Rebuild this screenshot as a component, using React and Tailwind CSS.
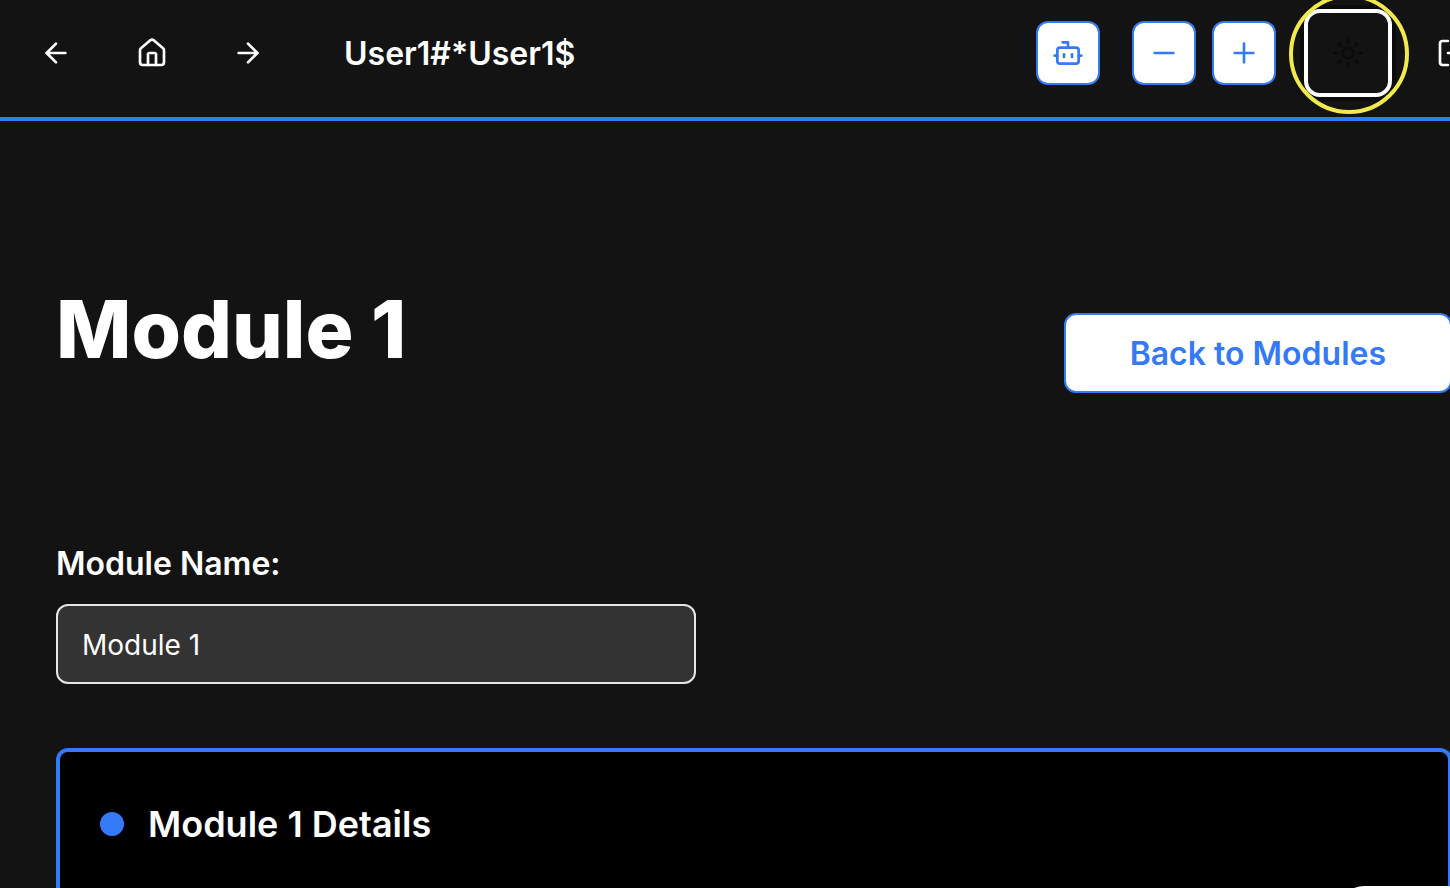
import { ArrowLeft, ArrowRight, Bot, House, LogOut, Minus, Plus, Sun } from "lucide-react";

const iconButton = "flex size-16 shrink-0 items-center justify-center rounded-xl";
const toolButton = "border-2 border-[#347af6] bg-white text-[#347af6]";

function Header() {
  return (
    <header className="flex items-center justify-between border-b-4 border-[#347af6] px-6 pt-[9px] pb-5">
      <nav className="flex items-center gap-8">
        <button type="button" aria-label="Back" className={iconButton}>
          <ArrowLeft size={32} />
        </button>
        <a href="#home" aria-label="Home" className={iconButton}>
          <House size={32} />
        </a>
        <button type="button" aria-label="Forward" className={iconButton}>
          <ArrowRight size={32} />
        </button>
        <p className="pt-0.5 pl-8 text-[32px] leading-10 font-semibold">User1#*User1$</p>
      </nav>
      <div className="flex items-center gap-7">
        <div className="flex items-center gap-8">
          <button type="button" aria-label="Assistant" className={`${iconButton} ${toolButton}`}>
            <Bot size={32} />
          </button>
          <div className="flex gap-4">
            <button type="button" aria-label="Decrease text size" className={`${iconButton} ${toolButton}`}>
              <Minus size={32} />
            </button>
            <button type="button" aria-label="Increase text size" className={`${iconButton} ${toolButton}`}>
              <Plus size={32} />
            </button>
          </div>
        </div>
        <button
          type="button"
          aria-label="Toggle theme"
          className="relative flex size-[88px] shrink-0 items-center justify-center rounded-2xl border-4 border-white bg-[#131313] text-[#0b0b0b] shadow-[0_0_0_4px_#0c0c0c]"
        >
          <Sun size={32} />
          <span className="pointer-events-none absolute -top-[19px] -left-[19px] size-[120px] rounded-full border-4 border-[#f2e94b]" />
        </button>
        <button type="button" aria-label="Log out" className={iconButton}>
          <LogOut size={32} />
        </button>
      </div>
    </header>
  );
}

export default function App() {
  return (
    <div className="relative h-screen overflow-hidden bg-[#131313] font-['Inter',sans-serif] text-white">
      <div className="flex h-full w-[104%] flex-col">
        <Header />
        <main className="flex flex-1 flex-col px-14 pt-40">
          <div className="flex items-start justify-between">
            <h1 className="text-[80px] leading-24 font-extrabold">Module 1</h1>
            <a
              href="#modules"
              className="mt-8 flex h-20 items-center rounded-xl border-2 border-[#347af6] bg-white px-16 pt-0.5 text-[32px] leading-10 font-semibold text-[#347af6]"
            >
              Back to Modules
            </a>
          </div>
          <div className="mt-[151px] flex flex-col gap-5">
            <label htmlFor="module-name" className="text-[32px] leading-10 font-semibold">
              Module Name:
            </label>
            <input
              id="module-name"
              type="text"
              defaultValue="Module 1"
              className="h-20 w-[640px] rounded-xl border-2 border-[#e6e6e6] bg-[#333333] px-6 pt-0.5 text-[28px]"
            />
          </div>
          <section className="mt-16 flex-1 rounded-t-xl border-x-4 border-t-4 border-[#347af6] bg-black px-10 pt-12">
            <div className="flex items-center gap-6">
              <span className="size-6 rounded-full bg-[#347af6]" />
              <h2 className="text-[36px] leading-12 font-semibold">Module 1 Details</h2>
            </div>
          </section>
        </main>
      </div>
      <button
        type="button"
        aria-label="Open menu"
        className="absolute -right-5 -bottom-[62px] h-16 w-[130px] rounded-3xl bg-white"
      />
    </div>
  );
}
